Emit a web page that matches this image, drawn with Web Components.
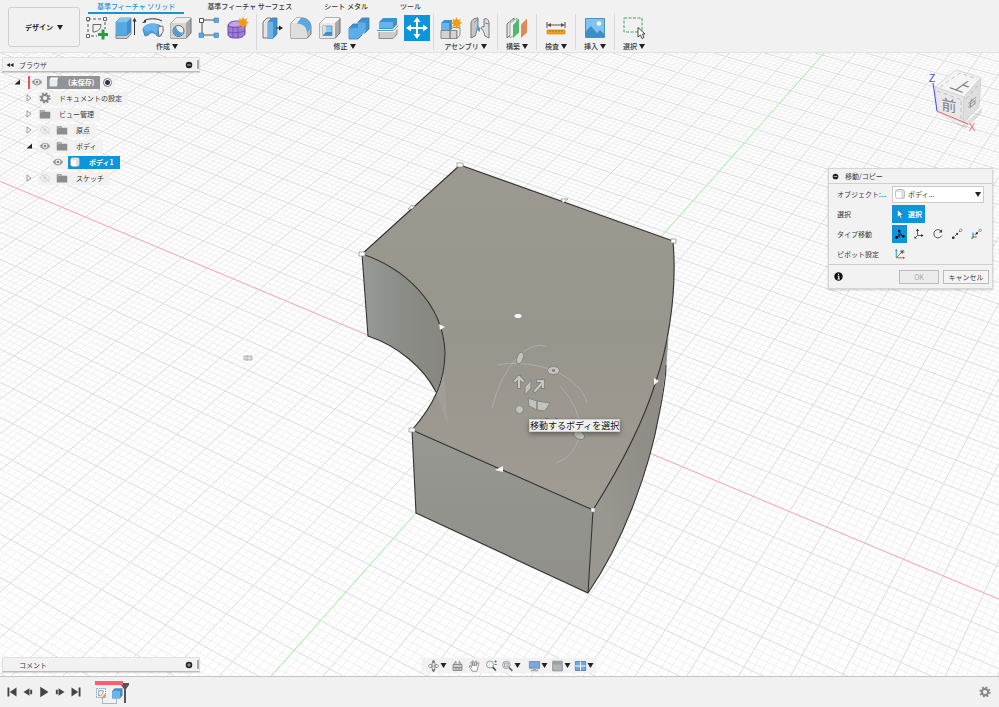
<!DOCTYPE html>
<html lang="ja">
<head>
<meta charset="utf-8">
<title>デザイン</title>
<style>
html, body { height: 100%; margin: 0; }
body { font: 7px/10px "Noto Sans CJK JP", "Liberation Sans", sans-serif; color: #3a3a3a; background: #fff; overflow: hidden; }
</style>
</head>
<body>
<cad-app></cad-app>
<script>
const box = (face, top, side, line = '#6d7275') =>
  `<path d="M3 8L8 3h15v15l-5 5.500H3z" fill="${side}" stroke="${line}" stroke-linejoin="round"/><path d="M3 8L8 3h15l-5 5z" fill="${top}"/><path d="M3 8h15v15.500H3z" fill="${face}"/>`;
const star = (x, y) => `<path transform="translate(${x} ${y})" d="M0-6l1.300 2.900L4.200-4.200 3.100-1.300 6 0 3.100 1.300 4.200 4.200 1.300 3.100 0 6-1.300 3.100-4.200 4.200-3.100 1.300-6 0-3.100-1.300-4.200-4.200-1.300-3.100z" fill="#f39c12"/>`;
const ICONS = {
  sketch: [26, '<path d="M4 4h17v10M4 4v17h9" fill="none" stroke="#555" stroke-dasharray="3 2"/><path d="M9 17V9.500h8c0 4.500-3.500 7.500-8 7.500z" fill="none" stroke="#555" stroke-width=".9"/><g fill="#fff" stroke="#444" stroke-width=".8"><path d="M2.500 2.500h3v3h-3zM19.500 2.500h3v3h-3zM2.500 19.500h3v3h-3z"/></g><path d="M17.500 14.500h3v3.500H24v3h-3.500v3.500h-3V21H14v-3h3.500z" fill="#20a33c"/>'],
  extrude: [26, '<path d="M4 19l4-3h11v3l-4 4.500H4z" fill="#c9c9c9" stroke="#777" stroke-width=".8"/><path d="M4 7l4-4h11v13l-4 4.500H4z" fill="#3f92d2" stroke="#4d7da3" stroke-width=".7"/><path d="M4 7h11v13.500H4z" fill="#57a9e4"/><path d="M4 7l4-4h11l-4 4z" fill="#83c4f3"/><path d="M22.500 20V5" stroke="#333"/><path d="M20.500 6.500l2-4 2 4z" fill="#333"/>'],
  revolve: [26, '<path d="M3 15C3 7 23 7 23 15l-2 6h-4c-2-4-7-4-8.500-1L5 21z" fill="#4da0dc" stroke="#477ba2" stroke-width=".8"/><path d="M3 14C6 7 17 7 19 12l-3 7c-2-4-6-5-8-2z" fill="#6ab5eb"/><path d="M18 12l5-1v6l-4 5z" fill="#eee" stroke="#666" stroke-width=".8"/><path d="M4 6c4-3 13-3 18 0" fill="none" stroke="#333"/><path d="M2 8l4-3.500v3z" fill="#333"/>'],
  hole: [26, box('#d4d4d4', '#efefef', '#a5a5a5') + '<circle cx="10.500" cy="16" r="5.500" fill="#eee" stroke="#666"/><path d="M8 11.500a5 5 0 1 0 7 6c-4 0-6-2-7-6z" fill="#4b9edb"/>'],
  pattern: [26, '<path d="M6 5h15M6 5v15h15" fill="none" stroke="#555"/><path d="M3.500 3.500h4v4h-4z" fill="#fff" stroke="#555"/><g fill="#54a9e7" stroke="#3d7fb0" stroke-width=".6"><path d="M18 3h4.500v4.500H18zM3 18h4.500v4.500H3zM18 18h4.500v4.500H18z"/></g>'],
  form: [26, '<path d="M4 10c2-4 6-4 11-4l6 2v11c-2 4-6 4-10 4s-7-1-7-4z" fill="#a07bd8" stroke="#6d4aa8"/><path d="M4 11c4 2 8 2 11 1l6-3M14 12v11M9 12v11M4 17c4 1 12 1 17-1" fill="none" stroke="#6d4aa8" stroke-width=".8"/><path d="M5 10.500c2-4 6-4 10-4l5 2.500c-4 2-9 3-15 1.500z" fill="#c3a5ef"/>' + star(19, 7.5)],
  press: [26, '<path d="M4 7l4-4h4v20H4z" fill="#e4e4e4" stroke="#777"/><path d="M9 7l4-4h5v16l-4 4.500H9z" fill="#3f92d2" stroke="#47799e" stroke-width=".8"/><path d="M9 7h5v16.500H9z" fill="#6bb5ec"/><path d="M17 13h5" stroke="#222"/><path d="M20 10.500l4 2.500-4 2.500z" fill="#222"/>'],
  fillet: [26, '<path d="M3 8.500L8 3h6c5 0 9 4 9 9v7l-4 4.500H3z" fill="#bdbdbd" stroke="#777"/><path d="M3 8.500h6c6 0 10 4 10 10v5H3z" fill="#dedede"/><path d="M3 8.500L8 3h5L9 8.500z" fill="#f1f1f1"/><path d="M9 8.500L13 3c6 0 10 4 10 10l-4 5c0-6-4-9.500-10-9.500z" fill="#57a9e4"/>'],
  shell: [26, box('#e8e8e8', '#f6f6f6', '#aaa') + '<path d="M6 11h9v9.500H6z" fill="#8cc9f4" stroke="#777" stroke-width=".7"/><path d="M6 11h3v6l-3 3z" fill="#ddd"/><path d="M9 17h6v3.500H6z" fill="#3f8cc7"/>'],
  combine: [26, '<path d="M12 7l4-4h7v11l-4 4h-3v2l-4 4H3V13l4-4h5z" fill="#3f92d2" stroke="#47799e" stroke-width=".8"/><path d="M3 13h9V7.500h7.500V18H16v1.500l-4 4H3z" fill="#5dade8"/>'],
  split: [26, '<path d="M4 16h14l4-4v7l-4 4.500H4z" fill="#ccc" stroke="#777" stroke-width=".8"/><path d="M4 7l4-4h14v7l-4 4H4z" fill="#3f92d2"/><path d="M4 7h14v6H4z" fill="#68b3eb"/><path d="M2 15.500h16.500l5-5" fill="none" stroke="#fff" stroke-width="3"/><path d="M2 15.500h16.500l5-5" fill="none" stroke="#4c9bd5"/>'],
  move: [26, '<path d="M13 4v18M4 13h18" stroke="#fff" stroke-width="2"/><path d="M13 2l3.500 5h-7zM13 24l3.500-5h-7zM2 13l5-3.500v7zM24 13l-5-3.500v7z" fill="#fff"/>'],
  assembly: [26, '<path d="M3 8l3-3h8v9l-2 2H3z" fill="#3f92d2"/><path d="M3 8h8v7H3z" fill="#67b3ec"/><path d="M3 15.500h9v8H3zM12 15.500h7v8h-7z" fill="#d3d3d3" stroke="#777" stroke-width=".8"/><path d="M12 15.500l3-3h7v7.500l-3 3.500v-8z" fill="#eee" stroke="#777" stroke-width=".8"/>' + star(18.5, 8)],
  joint: [26, '<path d="M4 9c0-4 3-6 7-6v9c-2 1-1 6-3 9l-4 2z" fill="#c5c5c5" stroke="#777"/><path d="M10 10l3 3v4l-3-2z" fill="#4c9eda"/><path d="M22 8c0-3-2-5-5-4v8c-2-1-3 0-3 2 2 0 3 4 4 7l4 2z" fill="#dedede" stroke="#777"/><path d="M7 8l4-4M18 8l4 1" stroke="#888"/>'],
  plane: [26, '<path d="M3 9l7-6v14l-7 6z" fill="#e3e3e3" stroke="#777"/><path d="M6 8.500l7-5.500v15l-7 5z" fill="#f1f1f1" stroke="#777" stroke-width=".6"/><path d="M9 10l6-6.500v14L9 23z" fill="#4eb86f"/><path d="M17 9.500l6-6v14L17 23z" fill="#e2895a"/>'],
  measure: [26, '<path d="M4 7v6M22 7v6M6 10h14" stroke="#555"/><path d="M4 10l4-2v4zM22 10l-4-2v4z" fill="#555"/><path d="M4 15h18v4H4z" fill="#f0a020" stroke="#d48712" stroke-width=".7"/><path d="M7 15v2M10 15v2M13 15v2M16 15v2M19 15v2" stroke="#8f5a08" stroke-width=".7"/>'],
  image: [26, '<path d="M3.500 3.500h19v19h-19z" fill="#80c2f2" stroke="#4b8fbd"/><circle cx="17" cy="8.500" r="2.300" fill="#fffbd0"/><path d="M4 16l5-5 6 7 3-3 4 4v3H4z" fill="#3e8fc6"/>'],
  pick: [26, '<path d="M3 3h18v14H3z" fill="none" stroke="#31ad58" stroke-dasharray="3 1.500"/><path d="M17 12.500v9.500l2.500-2 1.500 3.500 2-1-1.500-3.500H24z" fill="#fff" stroke="#333" stroke-width=".9"/>'],
  eye: [16, '<path d="M1 8c4-6 10-6 14 0-4 6-10 6-14 0z" fill="#999"/><circle cx="8" cy="8" r="3.300" fill="#eee"/><circle cx="8" cy="8" r="1.800" fill="#888"/>'],
  eyeoff: [16, '<path d="M1.500 8c4-6 9-6 13 0-4 6-9 6-13 0z" fill="none" stroke="#d0d0d0"/><circle cx="8" cy="8" r="2" fill="#d5d5d5"/><path d="M3 3l11 10" stroke="#d0d0d0" stroke-width="1.300"/>'],
  folder: [16, '<path d="M1 3h7v2h7v9H1z" fill="#8d8d8d"/><path d="M1 5.500l7-1.500" stroke="#ddd" stroke-width=".8"/>'],
  gear: [16, '<circle cx="8" cy="8" r="6" fill="none" stroke="#8a8a8a" stroke-width="3" stroke-dasharray="2.356 2.356"/><circle cx="8" cy="8" r="4.200" fill="none" stroke="#8a8a8a" stroke-width="2.800"/>'],
  cube: [16, '<path d="M2 5l2-3h10v9l-2 3H2z" fill="#b6bcc4" stroke="#777" stroke-width=".7"/><path d="M2 5h10v9H2z" fill="#e8ebef"/><path d="M2 5l2-3h10l-2 3z" fill="#fff"/>'],
  solid: [16, '<rect x="2" y="2" width="12" height="12" rx="3" fill="#e2e2e2" stroke="#999" stroke-width=".8"/><path d="M2.500 5.500h8v8H5l-2.500-2z" fill="#fff"/><path d="M10.500 5.500V13" stroke="#ccc"/>'],
  open: [16, '<path d="M14 3v10H3z" fill="#222"/>'],
  shut: [16, '<path d="M4 2l8 6-8 6z" fill="#fff" stroke="#666" stroke-width="1.300"/>'],
  back: [16, '<path d="M8 4v8L1 8zM15 4v8L8 8z" fill="#222"/>'],
  minus: [16, '<circle cx="8" cy="8" r="6.500" fill="#222"/><path d="M4 8h8" stroke="#ddd" stroke-width="1.600"/>'],
  plus: [16, '<circle cx="8" cy="8" r="6.500" fill="#222"/><path d="M4 8h8M8 4v8" stroke="#ddd" stroke-width="1.300"/>'],
  info: [16, '<circle cx="8" cy="8" r="7.500" fill="#111"/><path d="M8 3v2.500M6.500 7.500H8.500V12M6 12.500h4.500" stroke="#fff" stroke-width="2" fill="none"/>'],
  arrow: [16, '<path d="M4 1v12l3-2.500 2 4.500 2-1-2-4.500h4z" fill="#fff" stroke="#39536a" stroke-width=".7"/>'],
  free: [16, '<path d="M7 13V4M4 12l4-3 5 2M7 5l5 6" stroke="#111" stroke-width="1.100" fill="none"/><circle cx="7" cy="4" r="1.700"/><circle cx="3.500" cy="12.500" r="1.700"/><circle cx="12.500" cy="11" r="1.700"/>'],
  trans: [16, '<path d="M6 3v7h6M6 10l-3 3" stroke="#333" fill="none"/><path d="M4 4l2-3 2 3zM11 8l3 2-3 2zM2 11v3h3z" fill="#222"/>'],
  rot: [16, '<path d="M12.500 4.500A5.500 5.500 0 1 0 13 10" fill="none" stroke="#444" stroke-width="1.200"/><path d="M13.500 1.500V6H9z" fill="#444"/>'],
  ptp: [16, '<path d="M3 13L13 3" stroke="#333" stroke-dasharray="2 1.500"/><circle cx="3" cy="13" r="1.800" fill="#222"/><circle cx="8" cy="8" r="1.400" fill="#222"/><circle cx="13" cy="3" r="1.700" fill="#fff" stroke="#555" stroke-width=".8"/>'],
  ptpos: [16, '<path d="M4 12L13 3" stroke="#333" stroke-dasharray="2 1.500"/><circle cx="9" cy="7" r="1.500" fill="#222"/><circle cx="13.500" cy="3" r="1.600" fill="#fff" stroke="#555" stroke-width=".8"/><path d="M4 12V6" stroke="#2382df" stroke-width="1.500"/><path d="M4 12h5" stroke="#e34b3c" stroke-width="1.500"/><path d="M4 12l-2 2.500" stroke="#2fb54c" stroke-width="1.800"/>'],
  pivot: [16, '<path d="M3 13V3" stroke="#3584c8" stroke-width="1.300"/><path d="M3 13h10" stroke="#e04b3f" stroke-width="1.300"/><path d="M3 13l7-7" stroke="#2fa94b" stroke-width="1.300"/><path d="M1.500 4L3 1l1.500 3z" fill="#3584c8"/><path d="M12 11.500l3 1.500-3 1.500z" fill="#e04b3f"/><path d="M11 2v6M8 5h6M9 3l4 4M13 3L9 7" stroke="#333" stroke-width=".8"/>'],
  orbit: [16, '<ellipse cx="8" cy="8" rx="7" ry="2.500" fill="none" stroke="#777"/><ellipse cx="8" cy="8" rx="2.200" ry="5" fill="#eef" stroke="#777"/><path d="M8 0l2 3H6zM8 16l2-3H6zM5 8h6" stroke="#777" fill="#777"/>'],
  look: [16, '<path d="M2 6h12v8H2z" fill="#c9cdd1" stroke="#777"/><path d="M3 6l2-4h1v4M10 6V2h1l2 4M2 10h12M6 10v4M10 10v4" fill="none" stroke="#777"/>'],
  hand: [16, '<path d="M5 15c-1-3-4-5-4-7 1-1 2 0 3 2L3 4c0-2 2-1 2 0l1 4-1-6c0-2 2-1 2 0l1 6 1-6c0-1 2-1 2 0l-1 6 2-4c0-1 2-1 2 0-1 4-2 7-3 11z" fill="#fff" stroke="#777"/>'],
  zoom: [16, '<circle cx="6" cy="6" r="4.700" fill="#e8f4f3" stroke="#888"/><path d="M9.500 9.500L14 14" stroke="#444" stroke-width="2"/><path d="M12 2h3M13.500 .5v3M12 6h3" stroke="#555"/>'],
  window: [16, '<circle cx="6.500" cy="6.500" r="5" fill="#eee" stroke="#888"/><path d="M4 4h5v5H4z" fill="#c5dff0" stroke="#999"/><path d="M10 10l4.500 4.500" stroke="#666" stroke-width="2"/>'],
  monitor: [16, '<path d="M1 2h14v9H1z" fill="#76a9df" stroke="#6d7f92"/><path d="M6 11h4v2h3v2H3v-2h3z" fill="#aaa"/>'],
  shade: [16, '<path d="M1.500 1.500h13v13h-13z" fill="#b3b6b9" stroke="#888"/><path d="M2 2h12v4H2z" fill="#9aa0a5"/>'],
  grid: [16, '<path d="M1 2h14v12H1z" fill="#76a7dc" stroke="#4870a0"/><path d="M8 2v12M1 8h14" stroke="#fff" stroke-width="1.300"/>'],
  first: [16, '<path d="M2 2h2.500v12H2zM14 2v12L5 8z" fill="#444"/>'],
  prev: [16, '<path d="M10 3v10L2 8zM11 5h2.500v6H11z" fill="#444"/>'],
  play: [16, '<path d="M3 1l11 7-11 7z" fill="#444"/>'],
  next: [16, '<path d="M6 3v10l8-5zM2.500 5H5v6H2.500z" fill="#444"/>'],
  last: [16, '<path d="M14 2h-2.500v12H14zM2 2v12l9-6z" fill="#444"/>'],
  tsketch: [16, '<path d="M2 2h12v12H2z" fill="#f7fbff" stroke="#5b8fc0" stroke-dasharray="2 1"/><path d="M5 12V5h6c0 4-2 7-6 7z" fill="none" stroke="#777"/><path d="M8 15l5-6 2 2-5 5z" fill="#ed9b35"/>'],
  tsolid: [16, '<path d="M2 5l3-3h10v9l-3 4H2z" fill="#3f8fce" stroke="#7e8b95" stroke-width=".8"/><path d="M2 5h10v10H2z" fill="#6bb4ec"/>'],
};

function element(tag, html, setup) {
  const template = document.createElement('template');
  template.innerHTML = `<style>
    *{box-sizing:border-box}
    button,select,input{font:inherit;color:inherit;margin:0;padding:0;border:0;background:none}
    button{display:flex;align-items:center;justify-content:center}
    .caret{width:0;height:0;border:3px solid transparent;border-top:5px solid #222;border-bottom:0}
  </style>` + html;
  customElements.define(tag, class extends HTMLElement {
    constructor() {
      super();
      this.attachShadow({ mode: 'open' }).append(template.content.cloneNode(true));
    }
    connectedCallback() { if (setup) setup(this.shadowRoot, this); }
  });
}

element('cad-icon', '<style>:host{display:block;flex:none;width:var(--size,12px);height:var(--size,12px)}svg{display:block;width:100%;height:100%}</style><svg aria-hidden="true"></svg>',
  (root, host) => {
    const [size, art] = ICONS[host.getAttribute('name')];
    const svg = root.querySelector('svg');
    svg.setAttribute('viewBox', `0 0 ${size} ${size}`);
    svg.innerHTML = art;
  });

element('tool-group', `<style>
  :host{display:flex;flex-direction:column;align-items:center;padding:1px 6px 0;border-right:1px solid #d8d8d8}
  :host(:last-child){border:0}
  .icons{display:flex;gap:var(--gap,3px);height:26px}
  .icons button{width:26px;height:26px;--size:26px}
  .icons .on{background:#0b96dc}
  .label{height:10px;gap:2px;white-space:nowrap;line-height:10px;font-weight:500}
</style><div class="icons"></div><button class="label"><slot></slot><span class="caret"></span></button>`,
  (root, host) => {
    root.querySelector('.icons').innerHTML = host.getAttribute('icons').split(' ').map(n =>
      `<button aria-label="${n}" class="${n === 'move' ? 'on' : ''}"><cad-icon name="${n}"></cad-icon></button>`).join('');
  });

element('tool-bar', `<style>
  :host{display:flex;flex:none;height:53px;background:#f1f1f1;border-bottom:1px solid #e2e2e2;padding-left:8px}
  .space{width:72px;height:40px;margin-top:7px;border:1px solid #cfcfcf;border-radius:3px;gap:4px;font-weight:700;color:#222}
  .main{display:flex;flex-direction:column;margin-left:4px}
  nav{display:flex;gap:14px;height:14px;padding-left:4px}
  nav a{padding:1px 9px 0;height:14px;line-height:11px;color:inherit;text-decoration:none;white-space:nowrap;font-weight:500}
  nav a.on{color:#1595d8;border-bottom:2px solid #1595d8}
  .groups{display:flex;height:36px}
  .a{--gap:2px;padding-left:0}
  .b{padding-left:2px;padding-right:3px}
  .c{padding-left:4px;padding-right:4px}
</style>
<button class="space">デザイン<span class="caret"></span></button>
<div class="main">
  <nav><a href="#solid" class="on">基準フィーチャ ソリッド</a><a href="#surface">基準フィーチャ サーフェス</a><a href="#sheet">シート メタル</a><a href="#tool">ツール</a></nav>
  <div class="groups">
    <tool-group class="a" icons="sketch extrude revolve hole pattern form">作成</tool-group>
    <tool-group class="b" icons="press fillet shell combine split move">修正</tool-group>
    <tool-group class="c" icons="assembly joint">アセンブリ</tool-group>
    <tool-group icons="plane">構築</tool-group>
    <tool-group icons="measure">検査</tool-group>
    <tool-group icons="image">挿入</tool-group>
    <tool-group icons="pick">選択</tool-group>
  </div>
</div>`);

element('panel-bar', `<style>
  :host{display:flex;align-items:center;width:198px;height:15px;padding-left:3px;background:#f2f2f2;border:1px solid #e0e0e0;border-bottom-color:#bbb;box-sizing:border-box;box-shadow:0 1px 1px #0002}
  .back{width:8px;margin-right:5px;--size:8px}
  .title{flex:1}
  .grip{width:2px;height:9px;background:#aaa;margin-left:4px}
  .toggle{--size:8px}
</style><span class="back"></span><span class="title"><slot></slot></span><button class="toggle"></button><span class="grip"></span>`,
  (root, host) => {
    if (host.hasAttribute('collapse')) root.querySelector('.back').innerHTML = '<cad-icon name="back"></cad-icon>';
    const b = root.querySelector('.toggle');
    b.setAttribute('aria-label', host.getAttribute('toggle'));
    b.innerHTML = `<cad-icon name="${host.getAttribute('toggle')}"></cad-icon>`;
  });

element('tree-row', `<style>
  :host{display:flex;align-items:center;height:16px;padding-left:23px}
  :host([level="0"]){padding-left:11px}
  :host([level="2"]){padding-left:36px}
  .twist{width:8px;margin-right:5px;--size:8px}
  :host([level="0"]) .twist{margin-right:7px}
  :host([level="2"]) .twist{width:0}
  .chip{display:flex;align-items:center;height:13px;padding-right:6px;background:#f1f1f1e6;gap:3px}
  :host([level="2"]) .twist{margin-right:13px}
  .name{display:flex;align-items:center;gap:7px;height:13px;white-space:nowrap}
  .name cad-icon,.chip>cad-icon{margin:0 1px}
  :host([level="0"]) .chip{border-left:2px solid #f0505c;padding-right:3px}
  :host([level="0"]) .name,:host([level="2"]) .name{font-weight:700;color:#fff;padding-right:6px}
  :host([level="0"]) .name{background:#939393}
  :host([level="2"]) .name{background:#0b96dc}
  :host([level="2"]) .chip{padding:0}
  input{appearance:none;width:9px;height:9px;border:1px solid #777;border-radius:50%;background:radial-gradient(#334 0 2px,#fff 3px)}
</style><button class="twist" aria-label="開閉"></button><span class="chip"></span>`,
  (root, host) => {
    const [twist, icons, radio] = host.getAttribute('icons').split('|');
    const list = icons.split(' ').map(n => `<cad-icon name="${n}"></cad-icon>`);
    const last = list.pop();
    if (twist) root.querySelector('.twist').innerHTML = `<cad-icon name="${twist}"></cad-icon>`;
    root.querySelector('.chip').innerHTML = list.join('') + `<span class="name">${last}<slot></slot></span>` +
      (radio ? '<input type="radio" checked aria-label="アクティブ">' : '');
  });

element('browser-tree', `<style>:host{display:block}.rows{padding-top:2px}</style>
<panel-bar collapse toggle="minus">ブラウザ</panel-bar>
<div class="rows">
  <tree-row level="0" icons="open|eye cube|r">(未保存)</tree-row>
  <tree-row icons="shut|gear">ドキュメントの設定</tree-row>
  <tree-row icons="shut|folder">ビュー管理</tree-row>
  <tree-row icons="shut|eyeoff folder">原点</tree-row>
  <tree-row icons="open|eye folder">ボディ</tree-row>
  <tree-row level="2" icons="|eye solid">ボディ1</tree-row>
  <tree-row icons="shut|eyeoff folder">スケッチ</tree-row>
</div>`);

element('move-dialog', `<style>
  :host{display:block;width:165px;background:#f2f2f2;border:1px solid #d6d6d6;box-shadow:0 1px 2px #0003;box-sizing:border-box}
  header{display:flex;align-items:center;gap:6px;height:15px;padding-left:3px;border-bottom:1px solid #cfcfcf;--size:7px}
  .form{display:grid;grid-template-columns:55px 1fr;grid-auto-rows:20px;align-items:center;padding:0 8px}
  .combo{display:flex;align-items:center;height:17px;background:#fff;border:1px solid #ccc;padding:0 2px 0 1px;gap:2px;--size:12px}
  .combo select{appearance:none;flex:1;min-width:0;outline:0}
  .on{background:#0b96dc}
  .pick{width:33px;height:18px;gap:3px;color:#fff;font-weight:700;--size:10px}
  .types{display:flex;gap:4px;--size:12px}
  .types button{width:15px;height:18px}
  footer{display:flex;align-items:center;gap:4px;height:24px;padding:0 3px 0 5px;border-top:1px solid #cfcfcf;--size:9px}
  footer button{height:14px;width:46px;border:1px solid #bbb;background:#f4f4f4}
  footer .ok{width:40px;margin-left:auto;color:#aaa;background:#ececec}
</style>
<header><cad-icon name="minus"></cad-icon><span>移動/コピー</span></header>
<div class="form">
  <label for="obj">オブジェクト:...</label>
  <div class="combo"><cad-icon name="solid"></cad-icon><select id="obj"><option>ボディ...</option></select><span class="caret"></span></div>
  <span>選択</span><button class="pick on"><cad-icon name="arrow"></cad-icon>選択</button>
  <span>タイプ移動</span>
  <div class="types"><button class="on" aria-label="自由移動"><cad-icon name="free"></cad-icon></button><button aria-label="移動"><cad-icon name="trans"></cad-icon></button><button aria-label="回転"><cad-icon name="rot"></cad-icon></button><button aria-label="点から点"><cad-icon name="ptp"></cad-icon></button><button aria-label="点から位置"><cad-icon name="ptpos"></cad-icon></button></div>
  <span>ピボット設定</span><div class="types"><button aria-label="ピボット設定"><cad-icon name="pivot"></cad-icon></button></div>
</div>
<footer><cad-icon name="info"></cad-icon><button class="ok" disabled>OK</button><button>キャンセル</button></footer>`);

element('nav-bar', `<style>
  :host{display:flex;align-items:center;height:15px;padding:0 1px 0 4px;background:#f1f1f1e6}
  button{height:15px;width:17px;--size:12px}
  .menu{width:23px;gap:1px}
  .gap{margin-right:4px}
</style>
<button class="menu" aria-label="オービット"><cad-icon name="orbit"></cad-icon><span class="caret"></span></button><button aria-label="ビュー正面"><cad-icon name="look"></cad-icon></button><button aria-label="画面移動"><cad-icon name="hand"></cad-icon></button><button aria-label="ズーム"><cad-icon name="zoom"></cad-icon></button><button class="menu gap" aria-label="フィット"><cad-icon name="window"></cad-icon><span class="caret"></span></button><button class="menu" aria-label="表示設定"><cad-icon name="monitor"></cad-icon><span class="caret"></span></button><button class="menu" aria-label="グリッド"><cad-icon name="shade"></cad-icon><span class="caret"></span></button><button class="menu" aria-label="ビューポート"><cad-icon name="grid"></cad-icon><span class="caret"></span></button>`);

element('time-line', `<style>
  :host{display:flex;flex:none;align-items:center;height:31px;padding:0 8px 0 4px;background:#f1f1f1;border-top:1px solid #c4c4c4;box-sizing:border-box}
  .play{display:flex;--size:12px}
  .play button{width:16px;height:16px}
  .feat{display:flex;align-items:flex-start;margin-left:11px;height:22px}
  .items{display:flex;gap:4px;border-top:4px solid #f8606c;padding-top:1px;position:relative}
  .items button{width:12px;height:14px}
  .items::after{content:"";position:absolute;left:7px;right:6px;bottom:-4px;height:4px;border:1px solid #b5b5b5;border-top:0}
  .head{width:10px;height:22px;margin-left:-3px}
  .set{margin-left:auto;--size:12px}
</style>
<div class="play"><button aria-label="先頭"><cad-icon name="first"></cad-icon></button><button aria-label="前"><cad-icon name="prev"></cad-icon></button><button aria-label="再生"><cad-icon name="play"></cad-icon></button><button aria-label="次"><cad-icon name="next"></cad-icon></button><button aria-label="最後"><cad-icon name="last"></cad-icon></button></div>
<div class="feat"><div class="items"><button aria-label="スケッチ"><cad-icon name="tsketch"></cad-icon></button><button aria-label="押し出し"><cad-icon name="tsolid"></cad-icon></button></div>
<svg class="head" viewBox="0 0 10 22"><path d="M1 2h8v2L6 8v14H4V8L1 4z" fill="#555"/></svg></div>
<button class="set" aria-label="設定"><cad-icon name="gear"></cad-icon></button>`);

element('model-scene', `<style>:host{display:block;width:100%;height:100%}svg{display:block;width:100%;height:100%}
  .edge{fill:none;stroke:#333;stroke-width:1.1;stroke-linejoin:round}
  .mark{fill:#fff;stroke:#888;stroke-width:.7}
  .rig{fill:#c3c3be;stroke:#85857f;stroke-width:1}
  .ring{fill:none;stroke:#b4b2ad;stroke-width:.8}
  .arrows{fill:none;stroke-linecap:square}
</style>
<svg viewBox="0 53 999 623" preserveAspectRatio="xMidYMid slice" role="img" aria-label="モデル">
  <defs>
    <linearGradient id="inner"><stop offset="0" stop-color="#989b95"/><stop offset=".45" stop-color="#8b8e88"/><stop offset="1" stop-color="#87857e"/></linearGradient>
    <linearGradient id="outer" x1="0" y1="1" x2="1" y2="0"><stop offset=".2" stop-color="#9a9790"/><stop offset=".5" stop-color="#918e87"/><stop offset="1" stop-color="#8b8881"/></linearGradient>
    <linearGradient id="front" x2="0" y2="1"><stop offset="0" stop-color="#969891"/><stop offset="1" stop-color="#908f8a"/></linearGradient>
    <linearGradient id="top" x2="0" y2="1"><stop offset="0" stop-color="#9c9991"/><stop offset=".5" stop-color="#98958d"/><stop offset="1" stop-color="#a09c94"/></linearGradient>
  </defs>
  <rect y="0" width="999" height="707" fill="#fefefe"/>
  <path id="minor" fill="none" stroke="#f0f0f0"/>
  <path id="major" fill="none" stroke="#dcdcdc"/>
  <path id="ax" stroke="#ffabab"/><path id="ay" stroke="#a4f5a4"/>
  <path d="M244 356h8v4h-8zM247 355v6" fill="#ddd" stroke="#aaa" stroke-width=".8"/>
  <path d="M362 254C404 268 443 303 445 352C445 368 441 381 436 392C424 368 398 346 368 336z" fill="url(#inner)"/>
  <path d="M673 241C678 300 665 355 656 381C643 424 620 467 593 510L588 593C626 538 650 465 659 415Q666 375 668 337L673 300z" fill="url(#outer)"/>
  <path d="M412 430L593 510 588 593 416 513z" fill="url(#front)"/>
  <path d="M460 165L673 241C678 300 665 355 656 381C643 424 620 467 593 510L412 430C433 406 445 382 445 352C443 303 404 268 362 254z" fill="url(#top)"/>
  <path d="M436 392l8-20 4 55z" fill="#a9a69e" opacity=".5"/>
  <path class="edge" d="M460 165L673 241C678 300 665 355 656 381C643 424 620 467 593 510L412 430C433 406 445 382 445 352C443 303 404 268 362 254zM362 254L368 336C398 346 424 368 436 392M412 430l4 83 172 80 5-83M588 593C626 538 650 465 659 415Q666 380 666 365"/>
  <path d="M668 337l-2 28" stroke="#999"/>
  <g class="mark"><path d="M457 163h6v4h-6zM359 252h6v4h-6zM671 239h5v4h-5zM409 428h6v4h-6zM591 508h4v4h-4zM408 209l3-3h4l-3 3zM561 199h7l-5 4z"/></g>
  <path d="M439 324l6 3-5 3zM654 378l5 3-5 4zM503 466v6l-8-2zM514 316l2-2h4l2 2-2 2h-4z" fill="#f4f4f4"/>
  <path class="ring" d="M492 408Q500 376 517 358 532 342 546 346M497 365C535 358 580 375 587 403M560 386Q580 407 580 430 577 457 556 463"/>
  <g class="rig"><ellipse cx="520" cy="358" rx="3" ry="6" transform="rotate(18 520 358)"/><ellipse cx="553.500" cy="370.500" rx="6" ry="4"/><ellipse cx="579" cy="435" rx="6" ry="4" transform="rotate(30 579 435)"/><circle cx="519.500" cy="409.500" r="4"/>
    <path d="M525 387l6-7v8l-6 7zM528 398l9 3v9l-8-4zM537 401l13 2-5 8-8-1z"/></g>
  <g class="arrows"><path id="arrow" d="M519 387v-10M515 381l4-4 4 4M535 391l8-9M538 381h5v6" stroke="#82827c" stroke-width="4"/><path d="M519 387v-10M515 381l4-4 4 4M535 391l8-9M538 381h5v6" stroke="#c6c6c1" stroke-width="2.200"/></g>
  <path d="M552 370.500h3M545 419h4M555 419h3" stroke="#777" stroke-width="2"/>
  <g>
    <path d="M939 114l24 11 19-17v5l-17 16z" fill="#000" opacity=".1"/>
    <path d="M935 87l21-17 25 8-17 19z" fill="#f4f4f4" stroke="#ccc" stroke-width=".7"/>
    <path d="M935 87l29 10-1 26-26-11z" fill="#e8e8e8" stroke="#ccc" stroke-width=".7"/>
    <path d="M964 97l17-19-2 29-16 16z" fill="#dedede" stroke="#ccc" stroke-width=".7"/>
    <path d="M937 91l25 9M961 101v19M966 99l14-16M940 87l20-14 17 6" fill="none" stroke="#aaa" stroke-width=".7" stroke-dasharray="4 3"/>
    <path d="M933 83l4 28" stroke="#4a4af0"/><path d="M937 111l31 13" stroke="#f06a6a"/>
    <g text-anchor="middle" font-size="15" fill="#7d8083"><text transform="translate(949 111) skewY(12)">前</text><text transform="translate(956 90) rotate(20) skewX(-35)">上</text><text transform="translate(972 106) skewY(-40)" font-size="9">右</text></g>
    <g text-anchor="middle" font-size="10" font-family="Liberation Sans"><text x="932" y="82" fill="#4a4af0">Z</text><text x="972" y="131" fill="#f06a6a">X</text></g>
  </g>
</svg>`, root => {
  /* Ground plane projected with a perspective matrix; one unit is a major cell, five minor cells each. */
  const project = (x, y) => {
    const w = 1 - .00979 * x + .01617 * y;
    return [(26.21 * x + 27.13 * y + 518) / w, (9.19 * x - 14.7 * y + 398) / w].map(n => n.toFixed(1)).join(' ');
  };
  const alongX = y => `M${project(-35, y)}L${project(30, y)}`;
  const alongY = x => `M${project(x, -20)}L${project(x, 38)}`;
  let minor = '', major = '';
  for (let i = -175; i <= 190; i++) {
    const add = (i >= -100 ? alongX(i / 5) : '') + (i <= 150 ? alongY(i / 5) : '');
    if (i % 5) minor += add; else major += add;
  }
  const set = (id, d) => root.getElementById(id).setAttribute('d', d);
  set('minor', minor); set('major', major); set('ax', alongX(0)); set('ay', alongY(0));
});

element('cad-app', `<style>
  :host{display:flex;flex-direction:column;height:100vh}
  main{position:relative;flex:1;min-height:0}
  model-scene{position:absolute;inset:0}
  browser-tree{position:absolute;left:2px;top:4px}
  move-dialog{position:absolute;right:6px;top:115px}
  .comment{position:absolute;left:2px;bottom:4px}
  nav-bar{position:absolute;bottom:3px;left:51%;transform:translateX(-50%)}
  .tip{position:absolute;left:529px;top:366px;font-size:9px;line-height:11px;color:#111;background:#f0f0f0;border:1px solid #ccc;box-shadow:0 2px 5px #0006;white-space:nowrap}
</style>
<tool-bar></tool-bar>
<main>
  <model-scene></model-scene>
  <browser-tree></browser-tree>
  <move-dialog></move-dialog>
  <div class="tip" role="tooltip">移動するボディを選択</div>
  <panel-bar class="comment" toggle="plus">コメント</panel-bar>
  <nav-bar></nav-bar>
</main>
<time-line></time-line>`);
</script>
</body>
</html>
